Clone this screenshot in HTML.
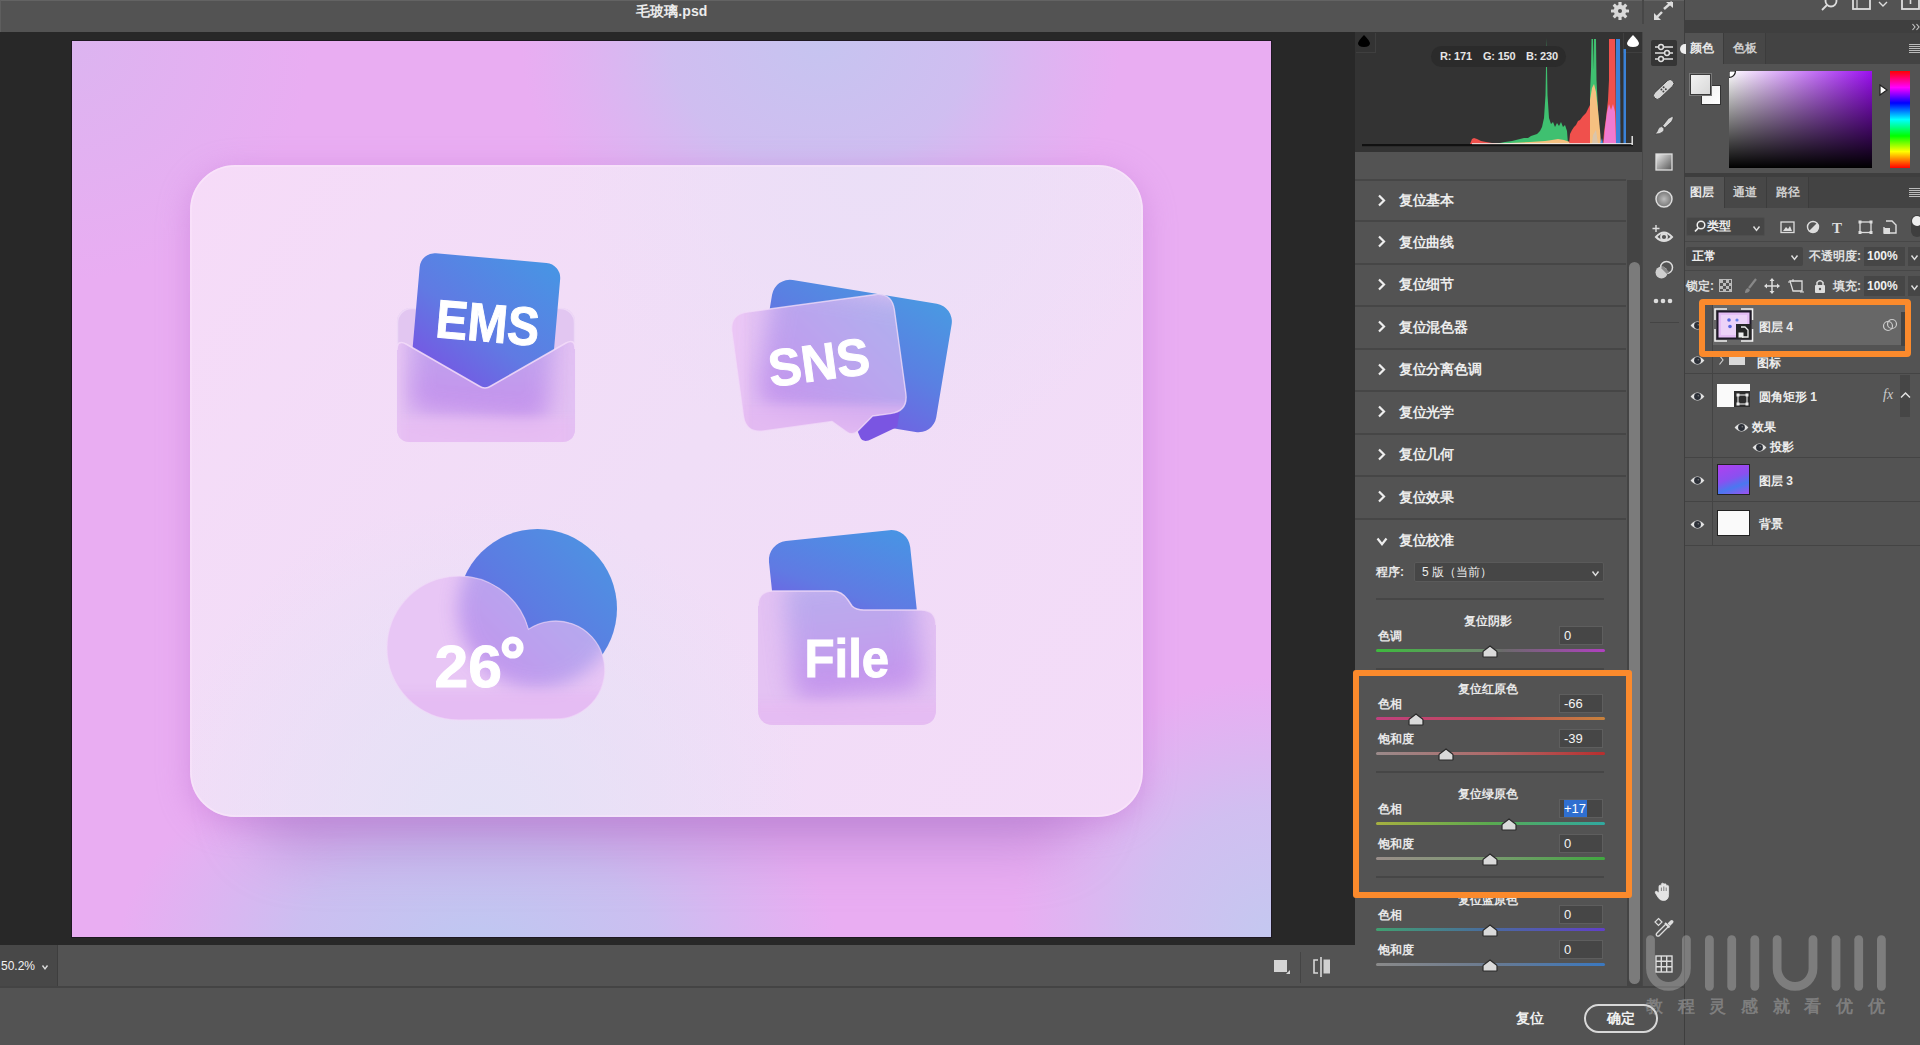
<!DOCTYPE html>
<html><head><meta charset="utf-8"><style>
*{margin:0;padding:0;box-sizing:border-box}
html,body{width:1920px;height:1045px;overflow:hidden;background:#535353;font-family:"Liberation Sans",sans-serif;color:#e8e8e8;position:relative}
.a{position:absolute}
.t{position:absolute;white-space:nowrap;line-height:1}
#titlebar{left:0;top:0;width:1685px;height:32px;background:#535353;border-top:1px solid #636363;border-left:1px solid #5e5e5e}
#canvasArea{left:0;top:32px;width:1355px;height:913px;background:#282828}
#img{left:72px;top:41px;width:1199px;height:896px;overflow:hidden;box-shadow:0 0 0 1px #1e1822}
#status{left:0;top:945px;width:1355px;height:41px;background:#535353}
#bottom{left:0;top:986px;width:1685px;height:59px;background:#535353;border-top:2px solid #444}
#cr{left:1355px;top:32px;width:287px;height:954px;background:#535353}
#tools{left:1642px;top:32px;width:43px;height:954px;background:#535353;border-left:1px solid #474747}
#ps{left:1684px;top:0;width:236px;height:1045px;background:#535353;border-left:1px solid #3e3e3e}
.row{position:absolute;left:0;width:271px;height:42.5px;border-top:2px solid #464646;background:#535353}
.row .chev{position:absolute;left:22px;top:14px;width:8px;height:12px}
.row .lbl{position:absolute;left:44px;top:12px;font-size:14px;color:#ececec;font-weight:bold;letter-spacing:-.3px}
.sl-title{font-size:12px;color:#e8e8e8;font-weight:bold}
.sl-lbl{font-size:12px;color:#e8e8e8;font-weight:bold}
.vbox{position:absolute;width:44px;height:19px;background:#464646;border:1px solid #5e5e5e;font-size:13px;color:#f4f4f4;padding:2px 0 0 4px;line-height:1}
.track{position:absolute;height:3px;border-radius:2px}
.thumb{position:absolute;width:14px;height:12px}
.sep{position:absolute;height:2px;background:#464646}
.eye{position:absolute;width:14px;height:9px}
.lname{font-size:12px;color:#ececec;font-weight:700}
</style></head><body>
<div id="titlebar" class="a"></div>
<div class="t" style="left:636px;top:4px;font-size:14px;color:#ececec;letter-spacing:.1px;font-weight:600">毛玻璃.psd</div>
<svg class="a" style="left:1610px;top:1px" width="20" height="20" viewBox="0 0 20 20">
<g fill="#d8d8d8" transform="translate(10 10)">
<circle r="6.2"/>
<rect x="-1.6" y="-9" width="3.2" height="4" rx=".5"/>
<rect x="-1.6" y="-9" width="3.2" height="4" rx=".5" transform="rotate(45)"/>
<rect x="-1.6" y="-9" width="3.2" height="4" rx=".5" transform="rotate(90)"/>
<rect x="-1.6" y="-9" width="3.2" height="4" rx=".5" transform="rotate(135)"/>
<rect x="-1.6" y="-9" width="3.2" height="4" rx=".5" transform="rotate(180)"/>
<rect x="-1.6" y="-9" width="3.2" height="4" rx=".5" transform="rotate(225)"/>
<rect x="-1.6" y="-9" width="3.2" height="4" rx=".5" transform="rotate(270)"/>
<rect x="-1.6" y="-9" width="3.2" height="4" rx=".5" transform="rotate(315)"/>
</g><circle cx="10" cy="10" r="2" fill="#4a4a4a"/></svg>
<div class="a" style="left:1642px;top:0;width:2px;height:24px;background:#474747"></div>
<svg class="a" style="left:1652px;top:1px" width="22" height="20" viewBox="0 0 22 20">
<g stroke="#dcdcdc" stroke-width="2.4" fill="none"><path d="M12 8 L20 1"/><path d="M3 18 L10 11"/></g>
<path d="M14 1 L21 1 L21 7 Z" fill="#dcdcdc"/><path d="M2 12 L2 19 L9 19 Z" fill="#dcdcdc"/></svg>
<div id="canvasArea" class="a"></div>
<div id="img" class="a"><svg width="1199" height="896" viewBox="72 41 1199 896">
<defs>
<radialGradient id="bg1" cx="821" cy="41" r="300" gradientUnits="userSpaceOnUse" gradientTransform="translate(821 41) scale(1 .85) translate(-821 -41)"><stop offset="0" stop-color="#c6c4f0"/><stop offset=".5" stop-color="#c9c2f0" stop-opacity=".8"/><stop offset="1" stop-color="#d0bcf0" stop-opacity="0"/></radialGradient>
<radialGradient id="bg2" cx="478" cy="950" r="360" gradientUnits="userSpaceOnUse" gradientTransform="translate(478 950) scale(1 .6) translate(-478 -950)"><stop offset="0" stop-color="#bec8f1"/><stop offset=".5" stop-color="#c4c3f0" stop-opacity=".8"/><stop offset="1" stop-color="#c8c0f0" stop-opacity="0"/></radialGradient>
<radialGradient id="bg3" cx="1271" cy="937" r="260" gradientUnits="userSpaceOnUse"><stop offset="0" stop-color="#c4c8f0"/><stop offset=".5" stop-color="#cbc3f0" stop-opacity=".8"/><stop offset="1" stop-color="#cfc0f0" stop-opacity="0"/></radialGradient>
<radialGradient id="bg4" cx="72" cy="41" r="240" gradientUnits="userSpaceOnUse"><stop offset="0" stop-color="#dcb4f0"/><stop offset="1" stop-color="#dcb4f0" stop-opacity="0"/></radialGradient>
<linearGradient id="card" x1="190" y1="165" x2="1143" y2="817" gradientUnits="userSpaceOnUse"><stop offset="0" stop-color="#f6dbf8"/><stop offset=".5" stop-color="#f0def7"/><stop offset="1" stop-color="#f4dbf8"/></linearGradient>
<radialGradient id="cardBL" cx="480" cy="830" r="330" gradientUnits="userSpaceOnUse"><stop offset="0" stop-color="#e4e2f6"/><stop offset="1" stop-color="#e4e2f6" stop-opacity="0"/></radialGradient>
<radialGradient id="cardTR" cx="870" cy="165" r="300" gradientUnits="userSpaceOnUse"><stop offset="0" stop-color="#ebdff7"/><stop offset="1" stop-color="#ebdff7" stop-opacity="0"/></radialGradient>
<filter id="sh" x="-20%" y="-20%" width="140%" height="150%"><feGaussianBlur stdDeviation="28"/></filter><filter id="sh2" x="-20%" y="-20%" width="140%" height="140%"><feGaussianBlur stdDeviation="16"/></filter>
<filter id="b12" x="-50%" y="-50%" width="200%" height="200%"><feGaussianBlur stdDeviation="12"/></filter>
<filter id="b8" x="-50%" y="-50%" width="200%" height="200%"><feGaussianBlur stdDeviation="9"/></filter>
<filter id="b5" x="-50%" y="-50%" width="200%" height="200%"><feGaussianBlur stdDeviation="5"/></filter>
<filter id="b3" x="-50%" y="-50%" width="200%" height="200%"><feGaussianBlur stdDeviation="2.5"/></filter>
<linearGradient id="blue" x1=".9" y1="0" x2=".3" y2="1"><stop offset="0" stop-color="#4894e4"/><stop offset=".55" stop-color="#607ae3"/><stop offset="1" stop-color="#7c4ee3"/></linearGradient>
<linearGradient id="blueD" x1="1" y1="0" x2="0" y2="1"><stop offset="0" stop-color="#4797e2"/><stop offset=".6" stop-color="#6475e2"/><stop offset="1" stop-color="#7a58e3"/></linearGradient>
<linearGradient id="blueS" x1="1" y1="0" x2="0" y2="1"><stop offset="0" stop-color="#4a98e2"/><stop offset=".5" stop-color="#5c7ce2"/><stop offset="1" stop-color="#7456e2"/></linearGradient>
<linearGradient id="blueB" x1=".9" y1="0" x2=".35" y2="1"><stop offset="0" stop-color="#4a98e2"/><stop offset=".45" stop-color="#5a80e2"/><stop offset="1" stop-color="#7858e2"/></linearGradient>
<linearGradient id="gb" x1="0" y1="0" x2="0" y2="1"><stop offset="0" stop-color="#9aa2ea"/><stop offset=".5" stop-color="#a88eea"/><stop offset="1" stop-color="#b070e8"/></linearGradient>
<linearGradient id="gbR" x1="1" y1="0" x2="0" y2="1"><stop offset="0" stop-color="#80aee8"/><stop offset=".5" stop-color="#9c92ea"/><stop offset="1" stop-color="#b070e8"/></linearGradient>
<linearGradient id="glassH" x1="0" y1="0" x2="1" y2="0"><stop offset="0" stop-color="#e9c0f4"/><stop offset=".45" stop-color="#cfaaf0"/><stop offset="1" stop-color="#b4a6ea"/></linearGradient>
<clipPath id="envFront"><path d="M397 350 Q397 339 406 344 L479 386 Q485 390 491 386 L566 343 Q575 338 575 349 L575 428 Q575 442 561 442 L411 442 Q397 442 397 428 Z"/></clipPath>
<clipPath id="snsFront"><path transform="translate(729.5 314.5) rotate(-7.8)" d="M18 0 H146 Q164 0 164 18 V102 Q164 120 146 120 H128 L111 133 Q105 137 100 132 L87 120 H18 Q0 120 0 102 V18 Q0 0 18 0Z"/></clipPath>
<clipPath id="cloud"><path d="M387 648 A72 72 0 0 1 528.5 629.3 A49 49 0 1 1 556 719 L459 720 A72 72 0 0 1 387 648 Z"/></clipPath>
<clipPath id="folder"><path d="M758 606 Q758 591 773 591 L832 591 Q842 591 848 600 L852 606 Q856 610 864 610 L921 610 Q936 610 936 625 L936 709 Q936 725 920 725 L774 725 Q758 725 758 709 Z"/></clipPath>
</defs>
<rect x="72" y="41" width="1199" height="896" fill="#e9adf2"/>
<rect x="72" y="41" width="1199" height="896" fill="url(#bg4)"/>
<rect x="72" y="41" width="1199" height="896" fill="url(#bg1)"/>
<rect x="72" y="41" width="1199" height="896" fill="url(#bg2)"/>
<rect x="72" y="41" width="1199" height="896" fill="url(#bg3)"/>
<rect x="190" y="172" width="953" height="652" rx="46" fill="#c47ed8" opacity=".6" filter="url(#sh2)"/>
<rect x="250" y="240" width="833" height="610" rx="50" fill="#a878c8" opacity=".5" filter="url(#sh)"/>
<rect x="190" y="165" width="953" height="652" rx="45" fill="url(#card)"/>
<rect x="190" y="165" width="953" height="652" rx="45" fill="url(#cardTR)"/>
<rect x="190" y="165" width="953" height="652" rx="45" fill="url(#cardBL)"/>
<rect x="191" y="166" width="951" height="650" rx="44" fill="none" stroke="#fbe8fc" stroke-width="1.5" opacity=".55"/>

<!-- EMS -->
<rect x="397" y="308" width="178" height="134" rx="14" fill="#e2c6f1"/>
<rect x="397.5" y="308.5" width="177" height="133" rx="14" fill="none" stroke="#f0dcf8" stroke-width="1.5" opacity=".8"/>
<rect x="421" y="252" width="141" height="150" rx="15" fill="url(#blue)" transform="rotate(5 421 252)"/>
<g clip-path="url(#envFront)">
<rect x="390" y="330" width="200" height="120" fill="#e4c2f3"/>
<rect x="421" y="262" width="141" height="150" rx="15" fill="url(#gb)" opacity=".6" transform="rotate(5 421 252)" filter="url(#b12)"/>
<rect x="390" y="418" width="200" height="40" fill="#e8bdf3" opacity=".7" filter="url(#b5)"/>
<rect x="380" y="330" width="22" height="120" fill="#e8c6f4" opacity=".6" filter="url(#b5)"/>
<rect x="570" y="330" width="22" height="120" fill="#e0c0f4" opacity=".5" filter="url(#b5)"/>
</g>
<path d="M397 350 Q397 339 406 344 L479 386 Q485 390 491 386 L566 343 Q575 338 575 349" fill="none" stroke="#f3dcf9" stroke-width="1.6" opacity=".85"/>
<text transform="translate(434.5 337) rotate(5) scale(.885 1)" font-family="Liberation Sans" font-weight="bold" font-size="54" fill="#fff" stroke="#fff" stroke-width="1" letter-spacing="0">EMS</text>

<!-- SNS -->
<g transform="translate(775 277) rotate(9.4)"><rect x="0" y="0" width="182" height="130" rx="18" fill="url(#blueB)"/><path d="M95 110 L145 110 L145 128 L122 144 Q114 150 110 144 L98 125 Z" fill="#7a55e2"/></g>
<g clip-path="url(#snsFront)">
<rect x="700" y="260" width="260" height="200" fill="#e6c4f4"/>
<rect x="0" y="0" width="182" height="130" rx="18" fill="url(#gbR)" opacity=".6" transform="translate(775 277) rotate(9.4)" filter="url(#b12)"/>
<rect x="700" y="405" width="260" height="60" fill="#e2b6f2" opacity=".65" filter="url(#b5)"/>
<rect x="720" y="300" width="25" height="150" fill="#eec8f6" opacity=".6" filter="url(#b5)"/>
</g>
<path transform="translate(729.5 314.5) rotate(-7.8)" d="M18 0 H146 Q164 0 164 18 V102 Q164 120 146 120 H128 L111 133 Q105 137 100 132 L87 120 H18 Q0 120 0 102 V18 Q0 0 18 0Z" fill="none" stroke="#f2dcf8" stroke-width="1.4" opacity=".75"/>
<text transform="translate(771 387) rotate(-7.8) scale(.95 1)" font-family="Liberation Sans" font-weight="bold" font-size="52" fill="#fff" stroke="#fff" stroke-width="1" letter-spacing="0">SNS</text>

<!-- Weather -->
<circle cx="537.5" cy="608.5" r="79.5" fill="url(#blueS)"/>
<g clip-path="url(#cloud)">
<rect x="380" y="570" width="230" height="160" fill="#e8c6f5"/>
<circle cx="537.5" cy="608.5" r="79.5" fill="url(#gbR)" opacity=".62" filter="url(#b8)"/>
<rect x="380" y="692" width="230" height="40" fill="#e4b8f2" opacity=".7" filter="url(#b5)"/>
</g>
<path d="M387 648 A72 72 0 0 1 528.5 629.3 A49 49 0 1 1 556 719 L459 720 A72 72 0 0 1 387 648 Z" fill="none" stroke="#f0d8f8" stroke-width="1.3" opacity=".6"/>
<text transform="translate(434.5 687) scale(1.01 1)" font-family="Liberation Sans" font-weight="bold" font-size="60" fill="#fff" stroke="#fff" stroke-width="1" letter-spacing="0">26</text><circle cx="512.6" cy="647.6" r="7.5" fill="none" stroke="#fff" stroke-width="7"/>

<!-- File -->
<rect x="767" y="543" width="142" height="112" rx="19" fill="url(#blue)" transform="rotate(-6 767 543)"/>
<g clip-path="url(#folder)">
<rect x="750" y="585" width="195" height="145" fill="#e4c2f3"/>
<rect x="779" y="583" width="130" height="120" rx="16" fill="url(#gb)" opacity=".6" transform="rotate(-5.4 769 543)" filter="url(#b12)"/>
<rect x="750" y="702" width="195" height="30" fill="#e6baf2" opacity=".7" filter="url(#b5)"/>
</g>
<path d="M758 606 Q758 591 773 591 L832 591 Q842 591 848 600 L852 606 Q856 610 864 610 L921 610 Q936 610 936 625" fill="none" stroke="#f1dbf8" stroke-width="1.5" opacity=".8"/>
<text transform="translate(804.5 677) scale(.91 1)" font-family="Liberation Sans" font-weight="bold" font-size="54" fill="#fff" stroke="#fff" stroke-width="1" letter-spacing="0">File</text>
</svg>
</div>
<div id="status" class="a"></div>
<div class="a" style="left:0;top:945px;width:58px;height:41px;background:#484848;border-right:1px solid #3e3e3e"></div>
<div class="t" style="left:1px;top:960px;font-size:12px;color:#f2f2f2">50.2%</div>
<svg class="a" style="left:41px;top:964px" width="8" height="6.8" viewBox="0 0 8 6.8"><path d="M1.5 1.5 L4.0 4.8 L6.5 1.5" fill="none" stroke="#ddd" stroke-width="1.4"/></svg>
<svg class="a" style="left:1273px;top:959px" width="18" height="16" viewBox="0 0 18 16"><rect x="1" y="1" width="13" height="12" fill="#d4d4d4"/><path d="M17 11 L17 15 L13 15 Z" fill="#d4d4d4"/></svg>
<div class="a" style="left:1300px;top:952px;width:1px;height:31px;background:#444"></div>
<svg class="a" style="left:1312px;top:956px" width="20" height="22" viewBox="0 0 20 22"><path d="M6 4 L2 4 L2 17 L6 17" fill="none" stroke="#d8d8d8" stroke-width="1.6"/><rect x="8.2" y="1" width="1.6" height="20" fill="#d8d8d8"/><rect x="11.5" y="3.5" width="6.5" height="14" fill="#d0d0d0"/></svg>
<div id="bottom" class="a"></div>
<div class="t" style="left:1516px;top:1011px;font-size:14px;color:#f0f0f0;font-weight:bold">复位</div>
<div class="a" style="left:1584px;top:1004px;width:74px;height:29px;border:2px solid #d8d8d8;border-radius:15px"></div>
<div class="t" style="left:1607px;top:1011px;font-size:14px;color:#f0f0f0;font-weight:bold">确定</div>
<div id="cr" class="a">
<div class="a" style="left:0;top:0;width:287px;height:120px;background:#333"></div>
<div class="a" style="left:1px;top:1px;width:20px;height:20px;border:1px solid #3f3f3f;border-top:none;border-left:none"></div>
<svg class="a" style="left:1px;top:2px" width="16" height="14" viewBox="0 0 16 14"><path d="M8 1 Q13 6 14 9 Q14 13 8 13 Q2 13 2 9 Q3 6 8 1Z" fill="#000"/></svg>
<div class="a" style="left:268px;top:1px;width:20px;height:20px;border:1px solid #3f3f3f;border-top:none;border-right:none"></div>
<svg class="a" style="left:270px;top:2px" width="16" height="14" viewBox="0 0 16 14"><path d="M8 1 Q13 6 14 9 Q14 13 8 13 Q2 13 2 9 Q3 6 8 1Z" fill="#fff"/></svg>
<svg class="a" style="left:0;top:0" width="287" height="120" viewBox="1355 32 287 120">
<path d="M1470 144 L1472 139 L1474 138 L1477 139 L1481 141 L1486 142 L1492 143 L1500 143 L1506 144 Z" fill="#f0504c"/>
<path d="M1495 144 L1505 142 L1512 141 L1520 139 L1524 138 L1528 138 L1531 136 L1534 135 L1537 134 L1540 131 L1542 127 L1544 118 L1545.5 95 L1546.5 38 L1547.5 95 L1549 118 L1551 124 L1553 122 L1555 127 L1557 123 L1559 126 L1561 122 L1563 127 L1565 125 L1567 131 L1568 144 Z" fill="#3fc070"/>
<path d="M1490 144 L1510 143 L1530 142 L1545 141 L1552 140 L1558 139 L1564 140 L1570 142 L1575 144 Z" fill="#f5c080"/>
<path d="M1569 144 L1570 134 L1572 130 L1574 127 L1576 125 L1578 121 L1580 120 L1583 116 L1586 113 L1588 109 L1590 105 L1590 144 Z" fill="#f0504c"/>
<path d="M1590 144 L1590 92 L1591 70 L1591.5 39 L1593 39 L1593.5 70 L1594 39 L1596 39 L1596.5 80 L1598 110 L1599 130 L1600 144 Z" fill="#3fc070"/>
<path d="M1590 144 L1590 100 L1592 88 L1594 84 L1596 92 L1598 110 L1600 130 L1601 144 Z" fill="#f5c080"/>
<path d="M1592 144 L1593 135 L1596 130 L1598 144 Z" fill="#c8c8c8" opacity=".6"/>
<path d="M1600 144 L1602 138 L1603 144Z" fill="#4a8ee0"/>
<path d="M1603 144 L1604 132 L1606 118 L1608 100 L1609 80 L1609 39 L1615 39 L1615.5 80 L1616 144 Z" fill="#f0504c"/>
<path d="M1603.5 144 L1605 128 L1607 112 L1609 104 L1611 110 L1613 104 L1615 112 L1616 144 Z" fill="#f07ad0"/>
<path d="M1616 144 L1616 39 L1620 39 L1620.5 144 Z" fill="#3a82d8"/>
<path d="M1623.5 144 L1623.5 49 L1626 49 L1626 144 Z" fill="#3a82d8"/>
<rect x="1362" y="144" width="271" height="2.2" fill="#111"/>
<rect x="1472" y="143" width="160" height="1.2" fill="#eee" opacity=".8"/>
<rect x="1631.5" y="136" width="1.4" height="9" fill="#eee"/>
</svg>
<div class="a" style="left:76px;top:14px;width:135px;height:21px;border-radius:11px;background:#2b2b2b"></div>
<div class="t" style="left:85px;top:19px;font-size:11px;color:#e6e6e6;font-weight:bold;letter-spacing:-.2px">R: 171</div>
<div class="t" style="left:128px;top:19px;font-size:11px;color:#e6e6e6;font-weight:bold;letter-spacing:-.2px">G: 150</div>
<div class="t" style="left:171px;top:19px;font-size:11px;color:#e6e6e6;font-weight:bold;letter-spacing:-.2px">B: 230</div>
<div class="a" style="left:272px;top:148px;width:15px;height:806px;background:#444"></div>
<div class="a" style="left:274px;top:230px;width:11px;height:722px;border-radius:6px;background:#7b7b7b"></div>
<div class="a" style="left:0;top:146.7px;width:271px;height:2px;background:#464646"></div>
<svg class="a" style="left:22px;top:161.7px" width="9" height="13" viewBox="0 0 9 13"><path d="M2 1.5 L7 6.5 L2 11.5" fill="none" stroke="#eee" stroke-width="2.2"/></svg>
<div class="t" style="left:44px;top:161.2px;font-size:14px;color:#ececec;font-weight:bold;letter-spacing:-.3px">复位基本</div>
<div class="a" style="left:0;top:188.2px;width:271px;height:2px;background:#464646"></div>
<svg class="a" style="left:22px;top:203.2px" width="9" height="13" viewBox="0 0 9 13"><path d="M2 1.5 L7 6.5 L2 11.5" fill="none" stroke="#eee" stroke-width="2.2"/></svg>
<div class="t" style="left:44px;top:202.7px;font-size:14px;color:#ececec;font-weight:bold;letter-spacing:-.3px">复位曲线</div>
<div class="a" style="left:0;top:230.7px;width:271px;height:2px;background:#464646"></div>
<svg class="a" style="left:22px;top:245.7px" width="9" height="13" viewBox="0 0 9 13"><path d="M2 1.5 L7 6.5 L2 11.5" fill="none" stroke="#eee" stroke-width="2.2"/></svg>
<div class="t" style="left:44px;top:245.2px;font-size:14px;color:#ececec;font-weight:bold;letter-spacing:-.3px">复位细节</div>
<div class="a" style="left:0;top:273.2px;width:271px;height:2px;background:#464646"></div>
<svg class="a" style="left:22px;top:288.2px" width="9" height="13" viewBox="0 0 9 13"><path d="M2 1.5 L7 6.5 L2 11.5" fill="none" stroke="#eee" stroke-width="2.2"/></svg>
<div class="t" style="left:44px;top:287.7px;font-size:14px;color:#ececec;font-weight:bold;letter-spacing:-.3px">复位混色器</div>
<div class="a" style="left:0;top:315.7px;width:271px;height:2px;background:#464646"></div>
<svg class="a" style="left:22px;top:330.7px" width="9" height="13" viewBox="0 0 9 13"><path d="M2 1.5 L7 6.5 L2 11.5" fill="none" stroke="#eee" stroke-width="2.2"/></svg>
<div class="t" style="left:44px;top:330.2px;font-size:14px;color:#ececec;font-weight:bold;letter-spacing:-.3px">复位分离色调</div>
<div class="a" style="left:0;top:358.2px;width:271px;height:2px;background:#464646"></div>
<svg class="a" style="left:22px;top:373.2px" width="9" height="13" viewBox="0 0 9 13"><path d="M2 1.5 L7 6.5 L2 11.5" fill="none" stroke="#eee" stroke-width="2.2"/></svg>
<div class="t" style="left:44px;top:372.7px;font-size:14px;color:#ececec;font-weight:bold;letter-spacing:-.3px">复位光学</div>
<div class="a" style="left:0;top:400.7px;width:271px;height:2px;background:#464646"></div>
<svg class="a" style="left:22px;top:415.7px" width="9" height="13" viewBox="0 0 9 13"><path d="M2 1.5 L7 6.5 L2 11.5" fill="none" stroke="#eee" stroke-width="2.2"/></svg>
<div class="t" style="left:44px;top:415.2px;font-size:14px;color:#ececec;font-weight:bold;letter-spacing:-.3px">复位几何</div>
<div class="a" style="left:0;top:443.2px;width:271px;height:2px;background:#464646"></div>
<svg class="a" style="left:22px;top:458.2px" width="9" height="13" viewBox="0 0 9 13"><path d="M2 1.5 L7 6.5 L2 11.5" fill="none" stroke="#eee" stroke-width="2.2"/></svg>
<div class="t" style="left:44px;top:457.7px;font-size:14px;color:#ececec;font-weight:bold;letter-spacing:-.3px">复位效果</div>
<div class="a" style="left:0;top:486.0px;width:271px;height:2px;background:#464646"></div>
<svg class="a" style="left:21px;top:505px" width="12" height="9.2" viewBox="0 0 12 9.2"><path d="M1.5 1.5 L6.0 7.199999999999999 L10.5 1.5" fill="none" stroke="#eee" stroke-width="2.2"/></svg>
<div class="t" style="left:44px;top:501px;font-size:14px;color:#ececec;font-weight:bold;letter-spacing:-.3px">复位校准</div>
<div class="t" style="left:21px;top:534px;font-size:12px;color:#e8e8e8;font-weight:bold">程序:</div>
<div class="a" style="left:59px;top:530px;width:190px;height:20px;background:#464646;border:1px solid #5a5a5a;border-radius:2px"></div>
<div class="t" style="left:67px;top:534px;font-size:12px;color:#ececec">5 版（当前）</div>
<svg class="a" style="left:236px;top:538px" width="9" height="7.3999999999999995" viewBox="0 0 9 7.3999999999999995"><path d="M1.5 1.5 L4.5 5.3999999999999995 L7.5 1.5" fill="none" stroke="#ddd" stroke-width="1.5"/></svg>
<div class="sep" style="left:21px;top:566px;width:228px"></div>
<div class="t sl-title" style="left:-3px;width:271px;text-align:center;top:583px">复位阴影</div>
<div class="t sl-lbl" style="left:23px;top:598px">色调</div>
<div class="vbox" style="left:204px;top:594px">0</div>
<div class="track" style="left:21px;top:617px;width:229px;background:linear-gradient(90deg,#3dba3d,#6c8c6c 45%,#6a6a6a 55%,#b040c0)"></div>
<svg class="a" style="left:127px;top:612.5px" width="16" height="13" viewBox="0 0 16 13"><path d="M8 1 L14.5 6 Q15 6.4 15 7 L15 11.5 Q15 12 14.5 12 L1.5 12 Q1 12 1 11.5 L1 7 Q1 6.4 1.5 6 Z" fill="#dadada" stroke="#2a2a2a" stroke-width="1.2"/></svg>
<div class="sep" style="left:21px;top:636px;width:228px"></div>
<div class="t sl-title" style="left:-3px;width:271px;text-align:center;top:651px">复位红原色</div>
<div class="t sl-lbl" style="left:23px;top:666px">色相</div>
<div class="vbox" style="left:204px;top:662px">-66</div>
<div class="track" style="left:21px;top:685px;width:229px;background:linear-gradient(90deg,#c0407e,#c04a5a 50%,#c8823c)"></div>
<svg class="a" style="left:53px;top:680.5px" width="16" height="13" viewBox="0 0 16 13"><path d="M8 1 L14.5 6 Q15 6.4 15 7 L15 11.5 Q15 12 14.5 12 L1.5 12 Q1 12 1 11.5 L1 7 Q1 6.4 1.5 6 Z" fill="#dadada" stroke="#2a2a2a" stroke-width="1.2"/></svg>
<div class="t sl-lbl" style="left:23px;top:701px">饱和度</div>
<div class="vbox" style="left:204px;top:697px">-39</div>
<div class="track" style="left:21px;top:720px;width:229px;background:linear-gradient(90deg,#9a8a8a,#b06a6a 50%,#b82e2e)"></div>
<svg class="a" style="left:83px;top:715.5px" width="16" height="13" viewBox="0 0 16 13"><path d="M8 1 L14.5 6 Q15 6.4 15 7 L15 11.5 Q15 12 14.5 12 L1.5 12 Q1 12 1 11.5 L1 7 Q1 6.4 1.5 6 Z" fill="#dadada" stroke="#2a2a2a" stroke-width="1.2"/></svg>
<div class="sep" style="left:21px;top:739px;width:228px"></div>
<div class="t sl-title" style="left:-3px;width:271px;text-align:center;top:756px">复位绿原色</div>
<div class="t sl-lbl" style="left:23px;top:771px">色相</div>
<div class="vbox" style="left:204px;top:767px"><span style="background:#2f6fd0;color:#fff;padding:1px 1px 1px 0">+17</span></div>
<div class="track" style="left:21px;top:790px;width:229px;background:linear-gradient(90deg,#a6b040,#5aaa50 50%,#30a8a0)"></div>
<svg class="a" style="left:146px;top:785.5px" width="16" height="13" viewBox="0 0 16 13"><path d="M8 1 L14.5 6 Q15 6.4 15 7 L15 11.5 Q15 12 14.5 12 L1.5 12 Q1 12 1 11.5 L1 7 Q1 6.4 1.5 6 Z" fill="#dadada" stroke="#2a2a2a" stroke-width="1.2"/></svg>
<div class="t sl-lbl" style="left:23px;top:806px">饱和度</div>
<div class="vbox" style="left:204px;top:802px">0</div>
<div class="track" style="left:21px;top:825px;width:229px;background:linear-gradient(90deg,#9a8e8a,#7a9a70 50%,#40a840)"></div>
<svg class="a" style="left:127px;top:820.5px" width="16" height="13" viewBox="0 0 16 13"><path d="M8 1 L14.5 6 Q15 6.4 15 7 L15 11.5 Q15 12 14.5 12 L1.5 12 Q1 12 1 11.5 L1 7 Q1 6.4 1.5 6 Z" fill="#dadada" stroke="#2a2a2a" stroke-width="1.2"/></svg>
<div class="sep" style="left:21px;top:844px;width:228px"></div>
<div class="t sl-title" style="left:-3px;width:271px;text-align:center;top:862px">复位蓝原色</div>
<div class="t sl-lbl" style="left:23px;top:877px">色相</div>
<div class="vbox" style="left:204px;top:873px">0</div>
<div class="track" style="left:21px;top:896px;width:229px;background:linear-gradient(90deg,#40a070,#4a6aa0 50%,#6040c8)"></div>
<svg class="a" style="left:127px;top:891.5px" width="16" height="13" viewBox="0 0 16 13"><path d="M8 1 L14.5 6 Q15 6.4 15 7 L15 11.5 Q15 12 14.5 12 L1.5 12 Q1 12 1 11.5 L1 7 Q1 6.4 1.5 6 Z" fill="#dadada" stroke="#2a2a2a" stroke-width="1.2"/></svg>
<div class="t sl-lbl" style="left:23px;top:912px">饱和度</div>
<div class="vbox" style="left:204px;top:908px">0</div>
<div class="track" style="left:21px;top:931px;width:229px;background:linear-gradient(90deg,#8a8a8a,#6a7a90 50%,#3a78c0)"></div>
<svg class="a" style="left:127px;top:926.5px" width="16" height="13" viewBox="0 0 16 13"><path d="M8 1 L14.5 6 Q15 6.4 15 7 L15 11.5 Q15 12 14.5 12 L1.5 12 Q1 12 1 11.5 L1 7 Q1 6.4 1.5 6 Z" fill="#dadada" stroke="#2a2a2a" stroke-width="1.2"/></svg>
</div>
<div class="a" style="left:1353px;top:670px;width:279px;height:228px;border:6px solid #fb8a2c;border-radius:3px"></div>
<div id="tools" class="a"></div>
<div class="a" style="left:1651px;top:40px;width:26px;height:26px;background:#353535;border-radius:2px"></div>
<svg class="a" style="left:1654px;top:43px" width="20" height="20" viewBox="0 0 20 20" fill="none" stroke="#e0e0e0" stroke-width="1.5">
<path d="M1 4 H19 M1 10 H19 M1 16 H19"/><circle cx="7" cy="4" r="2.4" fill="#353535"/><circle cx="13" cy="10" r="2.4" fill="#353535"/><circle cx="7" cy="16" r="2.4" fill="#353535"/></svg>
<svg class="a" style="left:1650px;top:76px" width="28" height="27" viewBox="0 0 28 27"><rect x="1.2" y="9.7" width="25" height="7.6" rx="3.8" transform="rotate(-43.5 13.6 13.5)" fill="#d6d6d6" stroke="#333" stroke-width=".8"/><g fill="#444"><circle cx="13.6" cy="11.3" r="1"/><circle cx="11.4" cy="13.5" r="1"/><circle cx="15.8" cy="13.3" r="1"/><circle cx="13.4" cy="15.6" r="1"/></g></svg>
<svg class="a" style="left:1653px;top:114px" width="22" height="22" viewBox="0 0 22 22"><path d="M19.9 2.7 Q20.6 3.6 19.6 5.6 L18.6 7.6 L11.9 13.8 L9.7 11.8 L15.4 4.5 L17.4 3.4 Q19.2 2.2 19.9 2.7 Z" fill="#d6d6d6" stroke="#333" stroke-width=".6"/><path d="M8.8 12.6 Q5.8 12.8 5 15.6 Q4.6 17.8 2 19.8 Q6.6 20.4 9.4 18.2 Q11.4 16.4 10.9 14.4 Z" fill="#d6d6d6" stroke="#333" stroke-width=".6"/></svg>
<svg class="a" style="left:1655px;top:153px" width="18" height="18" viewBox="0 0 18 18"><defs><linearGradient id="tg" x1="0" y1="0" x2="1" y2="1"><stop offset="0" stop-color="#eee"/><stop offset="1" stop-color="#555"/></linearGradient></defs><rect x="1" y="1" width="16" height="16" fill="url(#tg)" stroke="#ddd" stroke-width="1.3"/></svg>
<svg class="a" style="left:1654px;top:189px" width="20" height="20" viewBox="0 0 20 20"><defs><radialGradient id="rg"><stop offset="0" stop-color="#bbb"/><stop offset="1" stop-color="#777"/></radialGradient></defs><circle cx="10" cy="10" r="8" fill="url(#rg)" stroke="#ddd" stroke-width="1.5"/></svg>
<svg class="a" style="left:1652px;top:224px" width="24" height="20" viewBox="0 0 24 20"><path d="M4 1 V8 M0.5 4.5 H7.5" stroke="#ddd" stroke-width="1.4"/><path d="M4 13 Q12 4 20 13 Q12 21 4 13Z" fill="none" stroke="#ddd" stroke-width="2"/><circle cx="12" cy="13" r="3" fill="none" stroke="#ddd" stroke-width="1.8"/></svg>
<svg class="a" style="left:1654px;top:260px" width="20" height="20" viewBox="0 0 20 20"><circle cx="12.5" cy="7.5" r="6" fill="none" stroke="#ddd" stroke-width="1.5"/><circle cx="7.5" cy="12.5" r="6" fill="#cfcfcf"/><path d="M8 7 L14 13" stroke="#888" stroke-width="3"/></svg>
<svg class="a" style="left:1653px;top:296px" width="20" height="10" viewBox="0 0 20 10"><circle cx="3" cy="5" r="2.3" fill="#ddd"/><circle cx="10" cy="5" r="2.3" fill="#ddd"/><circle cx="17" cy="5" r="2.3" fill="#ddd"/></svg>
<div class="a" style="left:1650px;top:322px;width:29px;height:1px;background:#444"></div>
<svg class="a" style="left:1654px;top:882px" width="19" height="20" viewBox="0 0 19 20"><path d="M5 11 V4.5 Q5 3.2 6.2 3.2 Q7.4 3.2 7.4 4.5 V9 V2.5 Q7.4 1.2 8.6 1.2 Q9.8 1.2 9.8 2.5 V9 V3 Q9.8 1.8 11 1.8 Q12.2 1.8 12.2 3 V9 V4.6 Q12.2 3.4 13.4 3.4 Q14.6 3.4 14.6 4.6 V12.5 Q14.6 18.5 9.3 18.5 Q6 18.5 4 15.2 L1.4 11 Q0.8 9.6 2 9.3 Q3 9.1 3.8 10.2 Z" fill="#e4e4e4" stroke="#e4e4e4" stroke-width=".8" stroke-linejoin="round"/><g stroke="#535353" stroke-width=".7"><path d="M7.4 9 V5.5"/><path d="M9.8 9 V4.5"/><path d="M12.2 9 V5.5"/></g></svg>
<svg class="a" style="left:1652px;top:916px" width="24" height="22" viewBox="0 0 24 22"><path d="M6.5 2.5 L10 6 L6.5 9.5 L3 6 Z" fill="none" stroke="#ddd" stroke-width="1.2"/><path d="M5 20 Q3.5 18.5 5 17 L14 8 L16.5 10.5 L7.5 19.5 Q6.5 20.5 5 20Z" fill="none" stroke="#ddd" stroke-width="1.3"/><path d="M13 7 L17.5 11.5" stroke="#ddd" stroke-width="2"/><path d="M15.5 7.5 L18.5 4.5 Q19.8 3.4 21 4.6 Q22.2 5.8 21 7 L18 10 Z" fill="#ddd"/></svg>
<svg class="a" style="left:1655px;top:955px" width="18" height="18" viewBox="0 0 18 18" fill="none" stroke="#ddd" stroke-width="1.4"><rect x="1" y="1" width="16" height="16"/><path d="M6.3 1 V17 M11.7 1 V17 M1 6.3 H17 M1 11.7 H17"/></svg>
<div id="ps" class="a"></div>
<div class="a" style="left:1685px;top:0;width:235px;height:20px;background:#535353"></div>
<svg class="a" style="left:1818px;top:0" width="102" height="14" viewBox="0 0 102 14" fill="none" stroke="#ddd" stroke-width="1.8">
<circle cx="13" cy="1" r="5.5"/><path d="M9 5 L4 10"/>
<rect x="35" y="-4" width="17" height="13"/><path d="M39 -4 V9" stroke-width="1.2"/>
<path d="M61 2 L65 6 L69 2" stroke-width="1.4"/>
<rect x="84" y="-3" width="17" height="12"/><path d="M92.5 -3 V4" stroke-width="1.6"/></svg>
<div class="a" style="left:1685px;top:20px;width:235px;height:13px;background:#3f3f3f"></div>
<svg class="a" style="left:1912px;top:23px" width="8" height="8" viewBox="0 0 8 8"><path d="M0.5 1 L3 4 L0.5 7 M4.5 1 L7 4 L4.5 7" fill="none" stroke="#c8c8c8" stroke-width="1.1"/></svg>
<div class="a" style="left:1685px;top:33px;width:235px;height:31px;background:#434343"></div>
<div class="a" style="left:1685px;top:33px;width:38px;height:31px;background:#535353"></div>
<div class="a" style="left:1723px;top:33px;width:43px;height:31px;background:#474747;border-left:1px solid #3c3c3c;border-right:1px solid #3c3c3c"></div>
<div class="t" style="left:1690px;top:42px;font-size:12px;color:#e8e8e8;font-weight:600">颜色</div>
<div class="t" style="left:1733px;top:42px;font-size:12px;color:#cfcfcf;font-weight:600">色板</div>
<div class="a" style="left:1909px;top:44px;width:11px;height:9px;background:repeating-linear-gradient(#bbb 0 1px,transparent 1px 2px)"></div>
<div class="a" style="left:1680px;top:44px;width:6px;height:10px;border-radius:5px 0 0 5px;background:#eee"></div>
<div class="a" style="left:1701px;top:85px;width:20px;height:20px;background:linear-gradient(135deg,#eee,#fff);border:1px solid #333"></div>
<div class="a" style="left:1690px;top:74px;width:21px;height:21px;background:linear-gradient(135deg,#f2f2f2,#d8d8d8);border:1.5px solid #3a3a3a;box-shadow:0 0 0 1px #777"></div>
<div class="a" style="left:1729px;top:71px;width:143px;height:97px;background:linear-gradient(to bottom,rgba(0,0,0,0),#000),linear-gradient(to right,#fff,#9b10f0)"></div>
<svg class="a" style="left:1729px;top:71px" width="8" height="8" viewBox="0 0 8 8"><path d="M0 0 H6.5 A6.5 6.5 0 0 1 0 6.5 Z" fill="#fff" stroke="#1a1a1a" stroke-width="1.2"/></svg>
<div class="a" style="left:1890px;top:71px;width:20px;height:97px;background:linear-gradient(#ff0000,#ff00ff 17%,#0000ff 33%,#00ffff 50%,#00ff00 67%,#ffff00 83%,#ff0000)"></div>
<svg class="a" style="left:1879px;top:84px" width="10" height="12" viewBox="0 0 10 12"><path d="M1 1 L8 6 L1 11 Z" fill="#fff" stroke="#222" stroke-width="1.2"/></svg>
<div class="a" style="left:1685px;top:173px;width:235px;height:4px;background:#3e3e3e"></div>
<div class="a" style="left:1685px;top:177px;width:235px;height:31px;background:#434343"></div>
<div class="a" style="left:1685px;top:177px;width:39px;height:31px;background:#535353"></div>
<div class="a" style="left:1724px;top:177px;width:85px;height:31px;background:#474747;border-left:1px solid #3c3c3c;border-right:1px solid #3c3c3c"></div>
<div class="a" style="left:1766px;top:177px;width:1px;height:31px;background:#3c3c3c"></div>
<div class="t" style="left:1690px;top:186px;font-size:12px;color:#e8e8e8;font-weight:600">图层</div>
<div class="t" style="left:1733px;top:186px;font-size:12px;color:#cfcfcf;font-weight:600">通道</div>
<div class="t" style="left:1776px;top:186px;font-size:12px;color:#cfcfcf;font-weight:600">路径</div>
<div class="a" style="left:1909px;top:188px;width:11px;height:9px;background:repeating-linear-gradient(#bbb 0 1px,transparent 1px 2px)"></div>
<div class="a" style="left:1686px;top:217px;width:79px;height:19px;background:#464646;border:1px solid #4e4e4e;border-radius:2px"></div>
<svg class="a" style="left:1694px;top:220px" width="12" height="13" viewBox="0 0 12 13"><circle cx="7" cy="5" r="3.8" fill="none" stroke="#eee" stroke-width="1.5"/><path d="M4.3 8 L1 11.5" stroke="#eee" stroke-width="1.8"/></svg>
<div class="t" style="left:1707px;top:220px;font-size:12px;color:#ececec;font-weight:600">类型</div>
<svg class="a" style="left:1752px;top:225px" width="9" height="7.3999999999999995" viewBox="0 0 9 7.3999999999999995"><path d="M1.5 1.5 L4.5 5.3999999999999995 L7.5 1.5" fill="none" stroke="#ddd" stroke-width="1.5"/></svg>
<svg class="a" style="left:1780px;top:219px" width="130" height="18" viewBox="0 0 130 18">
<rect x="1" y="3" width="13" height="10.5" fill="none" stroke="#ddd" stroke-width="1.3"/><path d="M3 12 L6 8 L8 10 L10 7 L12 12 Z" fill="#ddd"/>
<circle cx="33" cy="8" r="5.5" fill="none" stroke="#ddd" stroke-width="1.4"/><path d="M29 12 A5.5 5.5 0 0 0 37 4 Z" fill="#ddd"/>
<text x="52" y="14" font-family="Liberation Serif" font-weight="bold" font-size="15" fill="#ddd">T</text>
<rect x="80" y="3" width="11" height="10.5" fill="none" stroke="#ddd" stroke-width="1.3"/><g fill="#ddd"><rect x="78.5" y="1.5" width="3" height="3"/><rect x="89.5" y="1.5" width="3" height="3"/><rect x="78.5" y="12" width="3" height="3"/><rect x="89.5" y="12" width="3" height="3"/></g>
<path d="M106 2 L112 2 L116 6 L116 14 L104 14 L104 8" fill="none" stroke="#ddd" stroke-width="1.4"/><rect x="104" y="9" width="6" height="6" fill="#ddd"/>
</svg>
<div class="a" style="left:1911px;top:215px;width:12px;height:22px;border-radius:6px;background:#3e3e3e"></div>
<div class="a" style="left:1912px;top:216px;width:10px;height:10px;border-radius:5px;background:#eee"></div>
<div class="a" style="left:1685px;top:241px;width:235px;height:1px;background:#474747"></div>
<div class="a" style="left:1686px;top:247px;width:117px;height:19px;background:#464646;border-radius:2px"></div>
<div class="t" style="left:1692px;top:250px;font-size:12px;color:#ececec;font-weight:600">正常</div>
<svg class="a" style="left:1790px;top:254px" width="9" height="7.3999999999999995" viewBox="0 0 9 7.3999999999999995"><path d="M1.5 1.5 L4.5 5.3999999999999995 L7.5 1.5" fill="none" stroke="#ddd" stroke-width="1.5"/></svg>
<div class="t" style="left:1809px;top:250px;font-size:12px;color:#e0e0e0;font-weight:600">不透明度:</div>
<div class="a" style="left:1864px;top:247px;width:41px;height:19px;background:#464646"></div>
<div class="t" style="left:1867px;top:250px;font-size:12px;color:#f0f0f0;font-weight:600">100%</div>
<div class="a" style="left:1908px;top:247px;width:12px;height:19px;background:#464646"></div>
<svg class="a" style="left:1910px;top:254px" width="9" height="7.3999999999999995" viewBox="0 0 9 7.3999999999999995"><path d="M1.5 1.5 L4.5 5.3999999999999995 L7.5 1.5" fill="none" stroke="#ddd" stroke-width="1.5"/></svg>
<div class="a" style="left:1685px;top:270px;width:235px;height:1px;background:#474747"></div>
<div class="t" style="left:1686px;top:280px;font-size:12px;color:#e0e0e0;font-weight:600">锁定:</div>
<svg class="a" style="left:1718px;top:278px" width="110" height="16" viewBox="0 0 110 16">
<rect x="1.5" y="1.5" width="12" height="12" fill="none" stroke="#bbb" stroke-width="1"/><g fill="#bbb"><rect x="2" y="2" width="3" height="3"/><rect x="8" y="2" width="3" height="3"/><rect x="5" y="5" width="3" height="3"/><rect x="11" y="5" width="2.5" height="3"/><rect x="2" y="8" width="3" height="3"/><rect x="8" y="8" width="3" height="3"/><rect x="5" y="11" width="3" height="2.5"/><rect x="11" y="11" width="2.5" height="2.5"/></g>
<path d="M38 1 L31 10" stroke="#888" stroke-width="2.2"/><path d="M30 10 Q27 11 27 15 Q31 15 32 12Z" fill="#888"/>
<path d="M54 1 V15 M47 8 H61" stroke="#ddd" stroke-width="1.5"/><path d="M54 0 L51.5 3 H56.5Z M54 16 L51.5 13 H56.5Z M46 8 L49 5.5 V10.5Z M62 8 L59 5.5 V10.5Z" fill="#ddd"/>
<path d="M72 3 H84 L84 13 H75 Z" fill="none" stroke="#ddd" stroke-width="1.3"/><path d="M70 4 H73 M82 14 H86 M75 1 V4" stroke="#ddd" stroke-width="1"/>
<rect x="97" y="7" width="10" height="8" rx="1" fill="#ddd"/><path d="M99 7 V4.5 Q102 1 105 4.5 V7" fill="none" stroke="#ddd" stroke-width="1.5"/><circle cx="102" cy="11" r="1.2" fill="#535353"/>
</svg>
<div class="t" style="left:1833px;top:280px;font-size:12px;color:#e0e0e0;font-weight:600">填充:</div>
<div class="a" style="left:1864px;top:276px;width:41px;height:20px;background:#464646"></div>
<div class="t" style="left:1867px;top:280px;font-size:12px;color:#f0f0f0;font-weight:600">100%</div>
<div class="a" style="left:1908px;top:276px;width:12px;height:20px;background:#464646"></div>
<svg class="a" style="left:1910px;top:284px" width="9" height="7.3999999999999995" viewBox="0 0 9 7.3999999999999995"><path d="M1.5 1.5 L4.5 5.3999999999999995 L7.5 1.5" fill="none" stroke="#ddd" stroke-width="1.5"/></svg>
<div class="a" style="left:1685px;top:300px;width:235px;height:246px;background:#535353"></div>
<div class="a" style="left:1712px;top:300px;width:1px;height:245px;background:#444"></div>
<div class="a" style="left:1713px;top:303px;width:192px;height:42px;background:#676767"></div>
<svg class="a" style="left:1689.5px;top:319.5px" width="15" height="11" viewBox="0 0 15 11"><path d="M0.6 5.5 Q7.5 -2.3 14.4 5.5 Q7.5 13.3 0.6 5.5Z" fill="#e2e2e2"/><circle cx="7.5" cy="5.5" r="3.4" fill="#2c3038"/><circle cx="8.3" cy="4.7" r=".8" fill="#777"/></svg>
<svg class="a" style="left:1714px;top:308px" width="40" height="34" viewBox="0 0 40 34">
<g stroke="#f2f2f2" stroke-width="1.6" fill="none"><path d="M1 12 V1 H13"/><path d="M27 1 H38.5 V12"/><path d="M1 21 V33 H13"/><path d="M27 33 H38.5 V21"/></g>
<rect x="3.5" y="3.5" width="33" height="27" fill="#e4bdf5" stroke="#1e1828" stroke-width="2"/>
<rect x="7" y="7" width="26" height="20" fill="#ecd2f8"/>
<circle cx="15" cy="12" r="1.8" fill="#5a68e0"/><circle cx="23" cy="12" r="1.6" fill="#6a80e8"/><circle cx="16" cy="18.5" r="1.8" fill="#5a68e0"/>
<rect x="22" y="16" width="15" height="15" fill="#262626"/>
<path d="M27 19 H31 L34 22 V29 H28" fill="none" stroke="#eee" stroke-width="1.3"/><rect x="24.5" y="24.5" width="5" height="5" fill="#eee"/>
</svg>
<div class="t lname" style="left:1759px;top:321px">图层 4</div>
<svg class="a" style="left:1882px;top:318px" width="16" height="14" viewBox="0 0 16 14"><circle cx="6" cy="8" r="4.5" fill="none" stroke="#ccc" stroke-width="1.2"/><circle cx="10" cy="6" r="4.5" fill="none" stroke="#ccc" stroke-width="1.2"/></svg>
<div class="a" style="left:1901px;top:312px;width:9px;height:34px;background:#444"></div>
<div class="a" style="left:1685px;top:373px;width:235px;height:1px;background:#444"></div>
<svg class="a" style="left:1689.5px;top:354.5px" width="15" height="11" viewBox="0 0 15 11"><path d="M0.6 5.5 Q7.5 -2.3 14.4 5.5 Q7.5 13.3 0.6 5.5Z" fill="#e2e2e2"/><circle cx="7.5" cy="5.5" r="3.4" fill="#2c3038"/><circle cx="8.3" cy="4.7" r=".8" fill="#777"/></svg>
<svg class="a" style="left:1718px;top:354px" width="7" height="12" viewBox="0 0 7 12"><path d="M1.5 1.5 L5 6 L1.5 10.5" fill="none" stroke="#ccc" stroke-width="1.2"/></svg>
<div class="a" style="left:1729px;top:356px;width:16px;height:9px;background:#d8d8d8"></div>
<div class="t lname" style="left:1757px;top:357px">图标</div>
<svg class="a" style="left:1689.5px;top:390.5px" width="15" height="11" viewBox="0 0 15 11"><path d="M0.6 5.5 Q7.5 -2.3 14.4 5.5 Q7.5 13.3 0.6 5.5Z" fill="#e2e2e2"/><circle cx="7.5" cy="5.5" r="3.4" fill="#2c3038"/><circle cx="8.3" cy="4.7" r=".8" fill="#777"/></svg>
<div class="a" style="left:1717px;top:384px;width:33px;height:23px;background:#fafafa"></div>
<div class="a" style="left:1734px;top:391px;width:16px;height:16px;background:#2e2e2e"></div>
<svg class="a" style="left:1736px;top:393px" width="13" height="13" viewBox="0 0 13 13"><rect x="2" y="2" width="9" height="9" fill="none" stroke="#eee" stroke-width="1.1"/><g fill="#eee"><rect x="0.5" y="0.5" width="3" height="3"/><rect x="9.5" y="0.5" width="3" height="3"/><rect x="0.5" y="9.5" width="3" height="3"/><rect x="9.5" y="9.5" width="3" height="3"/></g></svg>
<div class="t lname" style="left:1759px;top:391px">圆角矩形 1</div>
<div class="t" style="left:1883px;top:388px;font-size:14px;color:#ccc;font-style:italic;font-family:Liberation Serif">fx</div>
<div class="a" style="left:1900px;top:375px;width:10px;height:42px;background:#464646"></div>
<svg class="a" style="left:1900px;top:391px" width="11" height="8" viewBox="0 0 11 8"><path d="M1 6.5 L5.5 2 L10 6.5" fill="none" stroke="#e0e0e0" stroke-width="1.5"/></svg>
<svg class="a" style="left:1733.5px;top:421.5px" width="15" height="11" viewBox="0 0 15 11"><path d="M0.6 5.5 Q7.5 -2.3 14.4 5.5 Q7.5 13.3 0.6 5.5Z" fill="#e2e2e2"/><circle cx="7.5" cy="5.5" r="3.4" fill="#2c3038"/><circle cx="8.3" cy="4.7" r=".8" fill="#777"/></svg>
<div class="t lname" style="left:1752px;top:421px">效果</div>
<svg class="a" style="left:1751.5px;top:441.5px" width="15" height="11" viewBox="0 0 15 11"><path d="M0.6 5.5 Q7.5 -2.3 14.4 5.5 Q7.5 13.3 0.6 5.5Z" fill="#e2e2e2"/><circle cx="7.5" cy="5.5" r="3.4" fill="#2c3038"/><circle cx="8.3" cy="4.7" r=".8" fill="#777"/></svg>
<div class="t lname" style="left:1770px;top:441px">投影</div>
<div class="a" style="left:1685px;top:457px;width:235px;height:1px;background:#444"></div>
<svg class="a" style="left:1689.5px;top:474.5px" width="15" height="11" viewBox="0 0 15 11"><path d="M0.6 5.5 Q7.5 -2.3 14.4 5.5 Q7.5 13.3 0.6 5.5Z" fill="#e2e2e2"/><circle cx="7.5" cy="5.5" r="3.4" fill="#2c3038"/><circle cx="8.3" cy="4.7" r=".8" fill="#777"/></svg>
<div class="a" style="left:1717px;top:464px;width:33px;height:31px;background:linear-gradient(160deg,#b040f0,#8a50f0 45%,#4a78f0 70%,#a050f0);border:1px solid #222"></div>
<div class="t lname" style="left:1759px;top:475px">图层 3</div>
<div class="a" style="left:1685px;top:501px;width:235px;height:1px;background:#444"></div>
<svg class="a" style="left:1689.5px;top:518.5px" width="15" height="11" viewBox="0 0 15 11"><path d="M0.6 5.5 Q7.5 -2.3 14.4 5.5 Q7.5 13.3 0.6 5.5Z" fill="#e2e2e2"/><circle cx="7.5" cy="5.5" r="3.4" fill="#2c3038"/><circle cx="8.3" cy="4.7" r=".8" fill="#777"/></svg>
<div class="a" style="left:1717px;top:510px;width:33px;height:26px;background:#fafafa;border:1px solid #222"></div>
<div class="t lname" style="left:1759px;top:518px">背景</div>
<div class="a" style="left:1685px;top:545px;width:235px;height:1px;background:#444"></div>
<div class="a" style="left:1699px;top:299px;width:212px;height:58px;border:6px solid #fb8a2c;border-radius:4px"></div>
<svg class="a" style="left:1640px;top:925px" width="260" height="75" viewBox="0 0 260 75">
<g fill="none" stroke="#c8c8c8" stroke-opacity=".36" stroke-width="8.8" stroke-linecap="round">
<path d="M10.5 14.6 V43.35 A17.95 17.95 0 0 0 46.4 43.35 V14.6"/>
<path d="M69.4 14.6 V61.3"/><path d="M91.7 14.6 V61.3"/><path d="M114.8 14.6 V61.3"/>
<path d="M137.1 14.6 V43.35 A17.95 17.95 0 0 0 173 43.35 V14.6"/>
<path d="M196 14.6 V61.3"/><path d="M218.7 14.6 V61.3"/><path d="M241.4 14.6 V61.3"/>
</g>
</svg>
<div class="t" style="left:1646px;top:998px;font-size:17px;color:rgba(200,200,200,.38);letter-spacing:14.7px;font-weight:600">教程灵感就看优优</div>
</body></html>
